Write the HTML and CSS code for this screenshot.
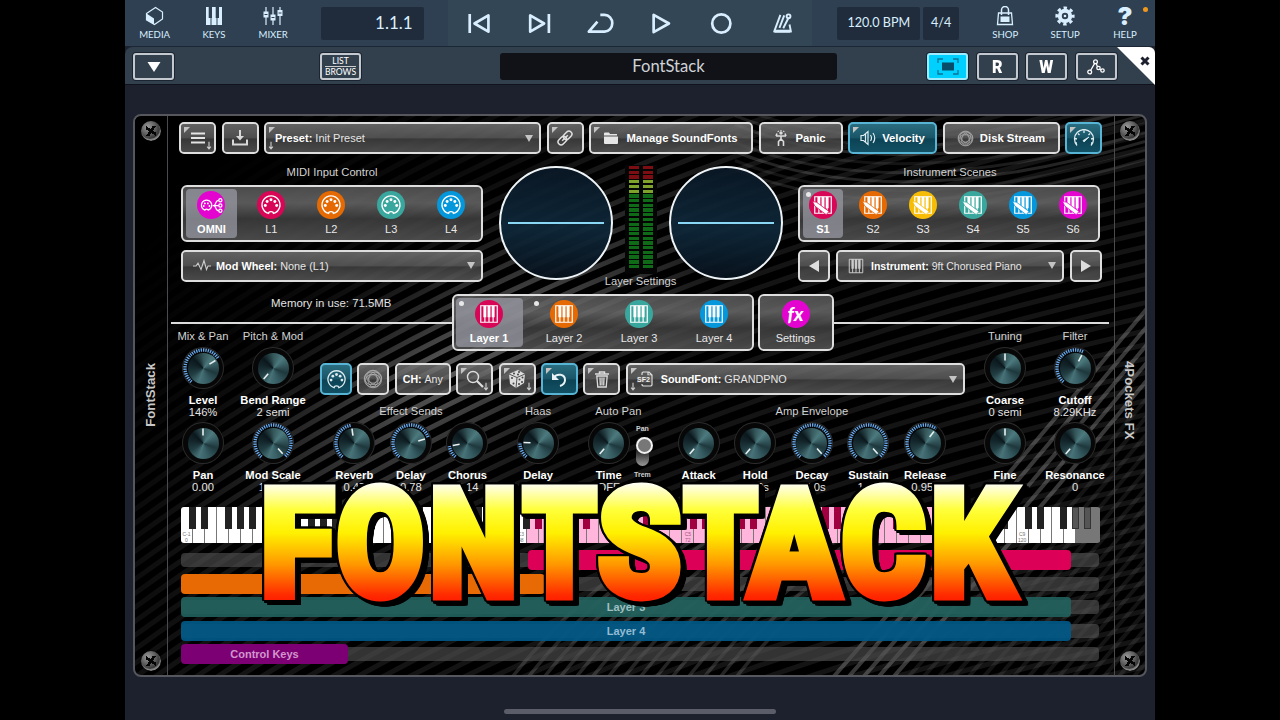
FILE: index.html
```html
<!DOCTYPE html>
<html lang="en">
<head>
  <meta charset="UTF-8" />
  <meta name="viewport" content="width=device-width, initial-scale=1.0"/>
  <title>FontStack</title>
  <link rel="stylesheet" href="styles.css">
</head>
<body>
  <!-- shared icons -->
  <svg class="defs" width="0" height="0">
    <symbol id="i-midi" viewBox="0 0 24 24">
      <path d="M9.3 21.2A9.8 9.8 0 1 1 14.7 21.2C14.4 18.6 9.6 18.6 9.3 21.2Z" fill="none" stroke="currentColor" stroke-width="1.5"/>
      <g fill="currentColor"><circle cx="5.8" cy="12.6" r="1.6"/><circle cx="7.8" cy="8.2" r="1.6"/><circle cx="12" cy="6.3" r="1.6"/><circle cx="16.2" cy="8.2" r="1.6"/><circle cx="18.2" cy="12.6" r="1.6"/></g>
    </symbol>
    <symbol id="i-omni" viewBox="0 0 24 24">
      <g fill="none" stroke="currentColor" stroke-width="1.2"><path d="M5.5 16.500A5 5 0 1 1 9 16.500C8.500 15 6 15 5.500 16.500Z"/><path d="M13 12h6M14 12c3 0 1-5 5-5M14 12c3 0 1 5 5 5"/><circle cx="20.500" cy="7" r="1.500"/><circle cx="20.500" cy="12" r="1.500"/><circle cx="20.500" cy="17" r="1.500"/></g>
      <g fill="currentColor"><circle cx="4.500" cy="12.500" r=".9"/><circle cx="5.600" cy="10" r=".9"/><circle cx="8.500" cy="10" r=".9"/><circle cx="10" cy="12.500" r=".9"/></g>
    </symbol>
    <symbol id="i-keys" viewBox="0 0 24 24">
      <path d="M3 3h18v18H3zM7.500 14v7M12 14v7M16.500 14v7" fill="none" stroke="currentColor" stroke-width="1.300"/>
      <path d="M5.900 3h3.200v12.500H5.900zM10.400 3h3.200v12.500h-3.200zM14.900 3h3.200v12.500h-3.200z" fill="currentColor"/>
    </symbol>
    <symbol id="i-scene" viewBox="0 0 24 24">
      <use href="#i-keys" width="24" height="24"/>
      <path d="M.5 8l4.500 1L18.500 19l-3 3.500L3 13z" fill="currentColor" stroke="var(--c)" stroke-width=".8"/>
    </symbol>
    <symbol id="i-swirl" viewBox="0 0 24 24">
      <g fill="none" stroke="currentColor" stroke-width=".8">
        <circle cx="12" cy="9.500" r="7.500"/><circle cx="14.400" cy="11.200" r="7.500"/><circle cx="13.500" cy="14" r="7.500"/><circle cx="10.500" cy="14" r="7.500"/><circle cx="9.600" cy="11.200" r="7.500"/><circle cx="12" cy="12" r="10.500"/>
      </g>
    </symbol>
    <symbol id="i-arrow" viewBox="0 0 8 12">
      <path d="M4 1v9M1.500 7.500L4 10.500 6.500 7.500" fill="none" stroke="currentColor" stroke-width="1.5"/>
    </symbol>
  </svg>

  <div class="app">
    <header class="topbar">
      <nav class="menu">
        <div class="menu-item">
          <svg width="20" height="20" viewBox="0 0 20 20"><path d="M1.500 7.500L10.500 1.500 17.500 6v7L9.500 18.500 1.500 14z" fill="none" stroke="currentColor" stroke-width="1.200"/><path d="M1.500 7.500L9 12.500v6L1.500 14z" fill="currentColor"/></svg>
          MEDIA
        </div>
        <div class="menu-item">
          <svg width="20" height="20" viewBox="0 0 20 20"><path d="M2 1h2.700v11h1.800v7H2zM8 1h3.700v11h.8v7H7.500v-7H8zM15 1h3v18h-4.500v-7H15z" fill="currentColor"/></svg>
          KEYS
        </div>
        <div class="menu-item">
          <svg width="22" height="20" viewBox="0 0 22 20"><path d="M4 1v18M11 1v18M18 1v18" stroke="currentColor" stroke-width="1.200"/><path d="M1.500 5.500h5v6h-5zM8.500 8.500h5v6h-5zM15.500 4h5v6h-5z" fill="currentColor"/><path d="M2.500 8.500h3M9.500 11.500h3M16.500 7h3" stroke="#2e4051"/></svg>
          MIXER
        </div>
      </nav>
      <div class="counter">1.1.1</div>
      <div class="transport">
        <svg viewBox="0 0 24 24"><path d="M2 2v20M21.500 3.500v17L7 12z"/></svg>
        <svg viewBox="0 0 24 24"><path d="M22 2v20M2.500 3.500v17L17 12z"/></svg>
        <svg viewBox="0 0 30 24"><path d="M12 10L3 20.500h16.500c4.500 0 8-4 8-8.800S24 3 19.500 3H15"/></svg>
        <svg viewBox="0 0 24 24"><path d="M4 3v18L20 12z"/></svg>
        <svg viewBox="0 0 24 24"><circle cx="12" cy="12" r="9.500"/></svg>
        <svg class="metro" viewBox="0 0 24 24"><path d="M10 3L3.500 20.500h17.500L19.500 13M14 3.500L9 16.500M13 17l5.500-11"/><circle cx="18.500" cy="4.500" r="2"/><path d="M4 20h16" stroke-width="3"/></svg>
      </div>
      <div class="tempo">120.0 BPM</div>
      <div class="signature">4/4</div>
      <nav class="menu menu-right">
        <div class="menu-item">
          <svg width="20" height="20" viewBox="0 0 20 20"><path d="M3.500 7h13l1 11.500h-15z" fill="none" stroke="currentColor" stroke-width="1.300"/><path d="M5.500 10.500h9V16h-9z" fill="currentColor"/><path d="M6.500 9V4a3.500 3.500 0 0 1 7 0v5" fill="none" stroke="currentColor" stroke-width="1.500"/></svg>
          SHOP
        </div>
        <div class="menu-item">
          <svg width="20" height="20" viewBox="0 0 20 20"><circle cx="10" cy="10" r="5.200" fill="none" stroke="currentColor" stroke-width="4"/><circle cx="10" cy="10" r="8.200" fill="none" stroke="currentColor" stroke-width="2.800" stroke-dasharray="3.440 3" stroke-dashoffset="1.700"/><circle cx="10" cy="10" r="1.300" fill="currentColor"/></svg>
          SETUP
        </div>
        <div class="menu-item">
          <span class="question">?</span>
          HELP
          <i class="alert"></i>
        </div>
      </nav>
    </header>

    <div class="subbar">
      <div class="box-btn"><svg width="14" height="12" viewBox="0 0 14 12"><path d="M.5 1h13L7 11z" fill="#fff"/></svg></div>
      <div class="box-btn list-btn"><span>LIST</span><span>BROWS</span></div>
      <div class="title">FontStack</div>
      <div class="sub-actions">
        <div class="box-btn on"><svg width="22" height="17" viewBox="0 0 22 17"><path d="M1 5V1h5M16 1h5v4M21 12v4h-5M6 16H1v-4" fill="none" stroke="#067398" stroke-width="1.300"/><path d="M5 4.500h12v8H5z" fill="#074c68"/></svg></div>
        <div class="box-btn letter"><span>R</span></div>
        <div class="box-btn letter"><span>W</span></div>
        <div class="box-btn"><svg width="18" height="16" viewBox="0 0 18 16"><path d="M3 12.500l5.500-9.500 3 7 4 1.500" fill="none" stroke="#fff" stroke-width="1.300"/><g fill="#323f4d" stroke="#fff" stroke-width="1.300"><circle cx="2.700" cy="13" r="1.900"/><circle cx="8.500" cy="2.700" r="1.900"/><circle cx="11.500" cy="9" r="1.700"/><circle cx="15.500" cy="11.500" r="1.700"/></g></svg></div>
      </div>
      <div class="close"><svg width="10" height="10" viewBox="0 0 10 10"><path d="M1.500 1.500l7 7M8.500 1.500l-7 7" stroke="#1d202d" stroke-width="3"/></svg></div>
    </div>

    <main class="panel">
      <svg class="texture" id="texture" viewBox="0 0 1010 558">
        <defs>
          <radialGradient id="sheen" gradientUnits="userSpaceOnUse" cx="310" cy="250" r="380" gradientTransform="translate(310 250) rotate(-32) scale(1 .36) translate(-310 -250)">
            <stop offset="0" stop-color="#fff" stop-opacity=".38"/>
            <stop offset=".35" stop-color="#fff" stop-opacity=".24"/>
            <stop offset=".8" stop-color="#fff" stop-opacity=".11"/>
            <stop offset="1" stop-color="#fff" stop-opacity=".08"/>
          </radialGradient>
          <linearGradient id="corner-shade" x1="0" y1="0" x2=".45" y2=".2">
            <stop offset=".2" stop-color="#000"/>
            <stop offset="1" stop-color="#000" stop-opacity="0"/>
          </linearGradient>
        </defs>
      </svg>

      <aside class="rail">
        <i class="screw"></i>
        <span class="rail-text">FontStack</span>
        <i class="screw"></i>
      </aside>

      <section class="content">
        <div class="toolbar">
          <div class="btn corner w37"><svg width="14" height="12" viewBox="0 0 14 12"><path d="M0 1.500h14M0 6h14M0 10.500h14" stroke="#e4e4e4" stroke-width="1.800"/></svg><svg class="drop-arrow"><use href="#i-arrow"/></svg></div>
          <div class="btn w37"><svg width="16" height="16" viewBox="0 0 16 16"><path d="M1 9.500v5h14v-5" fill="none" stroke="#d8d8d8" stroke-width="2"/><path d="M8 0v8" stroke="#d8d8d8" stroke-width="2"/><path d="M4 6h8l-4 4.500z" fill="#d8d8d8"/></svg></div>
          <div class="btn corner select preset"><svg class="drop-arrow left"><use href="#i-arrow"/></svg><b>Preset:</b>&nbsp;Init Preset<i class="caret"></i></div>
          <div class="btn corner w37"><svg width="16" height="16" viewBox="0 0 16 16"><g fill="none" stroke="#e0e0e0" stroke-width="1.500" transform="rotate(-45 8 8)"><rect x="-.5" y="5" width="9.500" height="6" rx="3"/><rect x="7" y="5" width="9.500" height="6" rx="3"/><path d="M4 8h8"/></g></svg></div>
          <div class="btn corner manage"><svg width="14" height="12" viewBox="0 0 14 12"><path d="M0 1.500Q0 .5 1 .5h4l1 1.500h7V3.500H0zM0 4.500h14V11q0 1-1 1H1q-1 0-1-1z" fill="#e6e6e6"/></svg><b>Manage SoundFonts</b></div>
          <div class="btn panic"><svg width="12" height="17" viewBox="0 0 12 17"><circle cx="6" cy="3" r="1.700" fill="#ddd"/><path d="M1 6h10M6 5.500V10M6 9l-2.500 2.500V16M6 9l2.500 2.500V16M1 6l1-2.500M11 6l-1-2.500M3 1l.5.8M9 1l-.5.8M6 0v.7" fill="none" stroke="#ddd" stroke-width="1.600"/></svg><b>Panic</b></div>
          <div class="btn corner on velocity"><svg width="17" height="16" viewBox="0 0 17 16"><path d="M1 5.500h2.500L8 1.500v13L3.500 10.500H1zM5.500 4v8M10.500 5q2 3 0 6M13 3q3.500 5 0 10" fill="none" stroke="#dcecf0" stroke-width="1.200"/></svg><b>Velocity</b></div>
          <div class="btn disk"><svg width="17" height="17" class="soft"><use href="#i-swirl"/></svg><b>Disk Stream</b></div>
          <div class="btn corner on w37"><svg width="22" height="18" viewBox="0 0 22 18"><path d="M4 16.500A9.500 9.500 0 1 1 18 16.500M2 9.500l2 .5M5 4.500l1.500 1.500M11 1.500V4M17 4.500L15.500 6M20 9.500l-2 .5M2 14h2M20 14h-2" fill="none" stroke="#dcecf0" stroke-width="1.300"/><path d="M10 11.500l6-3.500-5 5z" fill="#dcecf0" stroke="#dcecf0" stroke-width=".8"/></svg></div>
        </div>

        <div class="upper">
          <div class="col">
            <h3>MIDI Input Control</h3>
            <div class="tabs midi-tabs">
              <div class="tab active"><span class="dot magenta"><svg><use href="#i-omni"/></svg></span>OMNI</div>
              <div class="tab"><span class="dot red"><svg><use href="#i-midi"/></svg></span>L1</div>
              <div class="tab"><span class="dot orange"><svg><use href="#i-midi"/></svg></span>L2</div>
              <div class="tab"><span class="dot teal"><svg><use href="#i-midi"/></svg></span>L3</div>
              <div class="tab"><span class="dot blue"><svg><use href="#i-midi"/></svg></span>L4</div>
            </div>
            <div class="btn select modwheel"><svg width="18" height="14" viewBox="0 0 18 14"><path d="M0 7h3l2-3 3 6.500L11 1.500l2.500 9L15 7h3" fill="none" stroke="#ccc" stroke-width="1.100"/></svg><b>Mod Wheel:</b>&nbsp;None (L1)<i class="caret"></i></div>
          </div>
          <div class="scopes">
            <div class="scope"></div>
            <div class="meter-col">
              <div class="meters"><div class="meter"></div><div class="meter"></div></div>
              <h3>Layer Settings</h3>
            </div>
            <div class="scope"></div>
          </div>
          <div class="col">
            <h3>Instrument Scenes</h3>
            <div class="tabs scene-tabs">
              <div class="tab active marked"><span class="dot red"><svg><use href="#i-scene"/></svg></span>S1</div>
              <div class="tab"><span class="dot orange"><svg><use href="#i-scene"/></svg></span>S2</div>
              <div class="tab"><span class="dot yellow"><svg><use href="#i-scene"/></svg></span>S3</div>
              <div class="tab"><span class="dot teal"><svg><use href="#i-scene"/></svg></span>S4</div>
              <div class="tab"><span class="dot blue"><svg><use href="#i-scene"/></svg></span>S5</div>
              <div class="tab"><span class="dot magenta"><svg><use href="#i-scene"/></svg></span>S6</div>
            </div>
            <div class="instrument-row">
              <div class="btn step"><svg width="12" height="12" viewBox="0 0 12 12"><path d="M11 0v12L1 6z" fill="#ddd"/></svg></div>
              <div class="btn select instrument"><svg width="18" height="18"><use href="#i-keys"/></svg><b>Instrument:</b>&nbsp;9ft Chorused Piano<i class="caret"></i></div>
              <div class="btn step"><svg width="12" height="12" viewBox="0 0 12 12"><path d="M1 0v12l10-6z" fill="#ddd"/></svg></div>
            </div>
          </div>
        </div>

        <div class="layers-row">
          <div class="memory">Memory in use: 71.5MB</div>
          <div class="tabs layer-tabs">
            <div class="tab active marked"><span class="dot red"><svg><use href="#i-keys"/></svg></span>Layer 1</div>
            <div class="tab marked"><span class="dot orange"><svg><use href="#i-keys"/></svg></span>Layer 2</div>
            <div class="tab"><span class="dot teal"><svg><use href="#i-keys"/></svg></span>Layer 3</div>
            <div class="tab"><span class="dot blue"><svg><use href="#i-keys"/></svg></span>Layer 4</div>
          </div>
          <div class="tabs settings">
            <div class="tab"><span class="dot magenta fx">fx</span>Settings</div>
          </div>
          <div class="rule"></div>
        </div>

        <div class="controls">
          <div class="side-knobs">
            <h3>Mix &amp; Pan</h3><h3>Pitch &amp; Mod</h3>
            <div class="ctl"><div class="knob" data-angle="59" data-arc></div><b>Level</b><span>146%</span></div>
            <div class="ctl"><div class="knob" data-angle="-140"></div><b>Bend Range</b><span>2 semi</span></div>
            <div class="ctl"><div class="knob" data-angle="0"></div><b>Pan</b><span>0.00</span></div>
            <div class="ctl"><div class="knob" data-angle="138" data-arc></div><b>Mod Scale</b><span>100%</span></div>
          </div>

          <div class="layer-controls">
            <div class="layer-tools">
              <div class="btn on w32"><svg width="21" height="21" class="light"><use href="#i-midi"/></svg></div>
              <div class="btn w32"><svg width="20" height="20" class="soft"><use href="#i-swirl"/></svg></div>
              <div class="btn channel"><b>CH:</b>&nbsp;Any</div>
              <div class="btn corner w37"><svg width="18" height="18" viewBox="0 0 18 18"><circle cx="7" cy="7" r="5.500" fill="none" stroke="#ddd" stroke-width="1.400"/><path d="M11 11l6 6" stroke="#ddd" stroke-width="2.200"/></svg><svg class="drop-arrow"><use href="#i-arrow"/></svg></div>
              <div class="btn corner w37"><svg width="20" height="20" viewBox="0 0 20 20"><path d="M2 5l9-4 7 4-1 9-8 5-6-4z" fill="#ddd"/><path d="M2 5l8 3.500L18 5M10 8.500L9 19" fill="none" stroke="#555" stroke-width="1"/><g fill="#444"><circle cx="7" cy="4.500" r="1"/><circle cx="11" cy="5.500" r="1"/><circle cx="12" cy="3" r="1"/><circle cx="5" cy="9" r="1"/><circle cx="6.500" cy="14.500" r="1"/><circle cx="12.500" cy="10.500" r="1"/><circle cx="15.500" cy="8.500" r="1"/><circle cx="12" cy="15" r="1"/><circle cx="15" cy="13" r="1"/></g></svg><svg class="drop-arrow"><use href="#i-arrow"/></svg></div>
              <div class="btn corner on w37"><svg width="16" height="15" viewBox="0 0 16 15"><path d="M3 5.500C6 1 14 2 14 8c0 3-2 5-5 6" fill="none" stroke="#e6f2f5" stroke-width="2"/><path d="M1 1v7h7z" fill="#e6f2f5"/></svg></div>
              <div class="btn corner w37"><svg width="14" height="17" viewBox="0 0 14 17"><path d="M0 3h14M4.500 3V1h5v2" fill="none" stroke="#ddd" stroke-width="1.500"/><path d="M1.800 5l1 11h8.400l1-11zM5 6.500l.3 8M7 6.500v8M9 6.500l-.3 8" fill="none" stroke="#ddd" stroke-width="1.300"/></svg></div>
              <div class="btn corner select soundfont"><svg class="drop-arrow left"><use href="#i-arrow"/></svg><svg width="17" height="16" viewBox="0 0 17 16"><path d="M5 4V2l1-1h6l3 3v10l-1 1H6l-1-1v-1M11 1v3h4" fill="none" stroke="#ddd" stroke-width="1.200"/><path d="M0 4.500h14v7H0z" fill="#5c5c5c"/><text x="0" y="10.700" font-size="7" font-weight="bold" fill="#eee">SF2</text></svg><b>SoundFont:</b>&nbsp;GRANDPNO<i class="caret"></i></div>
            </div>
            <div class="groups">
              <div class="group">
                <h3>Effect Sends</h3>
                <div class="group-knobs">
                  <div class="ctl"><div class="knob" data-angle="-8" data-arc></div><b>Reverb</b><span>0.47</span></div>
                  <div class="ctl"><div class="knob" data-angle="74" data-arc></div><b>Delay</b><span>0.78</span></div>
                  <div class="ctl"><div class="knob" data-angle="-100" data-arc></div><b>Chorus</b><span>0.14</span></div>
                </div>
              </div>
              <div class="group haas">
                <h3>Haas</h3>
                <div class="group-knobs">
                  <div class="ctl"><div class="knob" data-angle="-88" data-arc></div><b>Delay</b><span>8ms</span></div>
                </div>
              </div>
              <div class="group autopan">
                <h3>Auto Pan</h3>
                <div class="group-knobs">
                  <div class="ctl"><div class="knob" data-angle="-140"></div><b>Time</b><span>OFF</span></div>
                  <div class="switch"><small>Pan</small><i></i><small>Trem</small></div>
                </div>
              </div>
              <div class="group">
                <h3>Amp Envelope</h3>
                <div class="group-knobs">
                  <div class="ctl"><div class="knob" data-angle="-140"></div><b>Attack</b><span>0.00s</span></div>
                  <div class="ctl"><div class="knob" data-angle="-140"></div><b>Hold</b><span>0.00s</span></div>
                  <div class="ctl"><div class="knob" data-angle="138" data-arc></div><b>Decay</b><span>10.0s</span></div>
                  <div class="ctl"><div class="knob" data-angle="138" data-arc></div><b>Sustain</b><span>1.00</span></div>
                  <div class="ctl"><div class="knob" data-angle="38" data-arc></div><b>Release</b><span>0.95s</span></div>
                </div>
              </div>
            </div>
          </div>

          <div class="side-knobs">
            <h3>Tuning</h3><h3>Filter</h3>
            <div class="ctl"><div class="knob" data-angle="0"></div><b>Coarse</b><span>0 semi</span></div>
            <div class="ctl"><div class="knob" data-angle="28" data-arc></div><b>Cutoff</b><span>8.29KHz</span></div>
            <div class="ctl"><div class="knob" data-angle="0"></div><b>Fine</b><span>0</span></div>
            <div class="ctl"><div class="knob" data-angle="-140"></div><b>Resonance</b><span>0</span></div>
          </div>
        </div>

        <div class="keyboard" id="keyboard"></div>

        <div class="lanes">
          <div class="lane"><div class="range lane-1"></div></div>
          <div class="lane"><div class="range lane-2"></div></div>
          <div class="lane"><div class="range lane-3">Layer 3</div></div>
          <div class="lane"><div class="range lane-4">Layer 4</div></div>
          <div class="lane"><div class="range lane-5">Control Keys</div></div>
        </div>
      </section>

      <aside class="rail rail-right">
        <i class="screw"></i>
        <span class="rail-text">4Pockets FX</span>
        <i class="screw"></i>
      </aside>
    </main>

    <div class="home-bar"></div>
  </div>

  <!-- big headline over the panel -->
  <svg class="headline" width="1280" height="720" viewBox="0 0 1280 720">
    <defs>
      <linearGradient id="fire" gradientUnits="userSpaceOnUse" x1="0" y1="484" x2="0" y2="601">
        <stop offset="0" stop-color="#fffff0"/>
        <stop offset=".22" stop-color="#ffff3a"/>
        <stop offset=".42" stop-color="#fff000"/>
        <stop offset=".68" stop-color="#ff9a00"/>
        <stop offset=".95" stop-color="#ff2a00"/>
        <stop offset="1" stop-color="#ff1e00"/>
      </linearGradient>
    </defs>
    <text id="headline" y="596"></text>
  </svg>

  <script src="script.js"></script>
</body>
</html>
```
FILE: styles.css
```css
html, body {
  margin: 0;
  padding: 0;
  height: 100%;
  overflow: hidden;
  background: #000;
  font-family: "Liberation Sans", Arial, sans-serif;
}

* {
  box-sizing: border-box;
}

.defs {
  position: absolute;
}

h3 {
  margin: 0;
  font-size: 11.2px;
  line-height: 14px;
  font-weight: normal;
  text-align: center;
  white-space: nowrap;
  color: #d2d2d2;
}

.app {
  width: 1030px;
  height: 720px;
  margin: 0 auto;
  background: #1d202d;
  display: flex;
  flex-direction: column;
}

/* top bar */
.topbar {
  height: 46px;
  flex: none;
  display: flex;
  background: #2e4051;
  color: #d9efff;
  font-family: Lato, sans-serif;
}

.menu {
  display: flex;
  width: 178px;
}

.menu-right {
  width: 180px;
  margin-left: 16px;
}

.menu-item {
  flex: 1;
  display: flex;
  flex-direction: column;
  align-items: center;
  padding-top: 6px;
  font-size: 9.6px;
  line-height: 12px;
  position: relative;
}

.menu-item svg {
  margin-bottom: 3px;
}

.question {
  height: 23px;
  font: 900 25px/21px Inter, sans-serif;
}

.alert {
  position: absolute;
  top: 7px;
  right: 7px;
  width: 5px;
  height: 5px;
  border-radius: 50%;
  background: #f0981e;
}

.counter, .tempo, .signature {
  height: 33px;
  margin-top: 7px;
  line-height: 32px;
  background: #202c3b;
  border-radius: 2px;
}

.counter {
  width: 103px;
  margin-left: 18px;
  padding-right: 11px;
  text-align: right;
  font-size: 17px;
}

.transport {
  width: 365px;
  margin-left: 24px;
  padding-left: 1px;
  display: flex;
  align-items: center;
  background: #334656;
}

.transport svg {
  flex: 1;
  min-width: 0;
  height: 23px;
  fill: none;
  stroke: #d9efff;
  stroke-width: 2.8;
  stroke-linejoin: round;
}

.transport .metro {
  stroke-width: 2;
}

.tempo {
  width: 83px;
  margin-left: 25px;
  text-align: center;
  font-size: 12.6px;
}

.signature {
  width: 36px;
  margin-left: 3px;
  text-align: center;
  font-size: 12.6px;
}

/* second bar */
.subbar {
  height: 39px;
  flex: none;
  display: flex;
  align-items: flex-start;
  padding: 6px 0 0 8px;
  border-top: 1px solid #1b2735;
  border-bottom: 1px solid #10131b;
  border-radius: 8px 8px 0 0;
  background: #323f4d;
  font-family: Lato, sans-serif;
}

.box-btn {
  width: 41px;
  height: 27px;
  display: flex;
  justify-content: center;
  align-items: center;
  border: 2px solid #c3c9cf;
  border-radius: 3px;
  background: #323f4d;
  box-shadow: 0 0 0 1px #1b2431;
}

.box-btn.on {
  background: #00d0fd;
  border-color: #9eecff;
}

.list-btn {
  margin-left: 146px;
  flex-direction: column;
  color: #fff;
  font-size: 8.6px;
  line-height: 10.5px;
}

.list-btn span:last-child {
  border-top: 1px solid #ccc;
}

.title {
  width: 337px;
  height: 27px;
  margin-left: 139px;
  border-radius: 3px;
  background: #111218;
  color: #cfd2d6;
  font-size: 16.6px;
  line-height: 26px;
  text-align: center;
}

.sub-actions {
  display: flex;
  gap: 8.6px;
  margin-left: 90px;
}

.letter {
  color: #fff;
  font: 900 19px/22px Roboto, sans-serif;
}

.letter span {
  transform: scaleX(.85);
}

.close {
  width: 38px;
  height: 38px;
  margin: -6px 0 0 auto;
  display: flex;
  justify-content: flex-end;
  padding: 9px 5px 0 0;
  clip-path: polygon(0 0, 100% 0, 100% 100%);
  background: #fff;
  border-radius: 0 6px 0 0;
}

/* plugin panel */
.panel {
  position: relative;
  width: 1014px;
  height: 563px;
  margin: 29px 0 0 8px;
  display: flex;
  border: 2px solid #56575c;
  border-radius: 8px;
  background: #000;
  overflow: hidden;
  color: #fff;
}

.texture {
  position: absolute;
  width: 1010px;
  height: 559px;
}

.rail {
  position: relative;
  width: 33px;
  flex: none;
  display: flex;
  flex-direction: column;
  justify-content: space-between;
  align-items: center;
  padding: 5px 1px 4px 0;
  border-right: 1px solid #4b4b4d;
}

.rail-right {
  width: 31px;
  padding-left: 0;
  border-right: 0;
  border-left: 1px solid #4b4b4d;
}

.rail-text {
  writing-mode: vertical-rl;
  transform: rotate(180deg) translateY(1px);
  font-size: 13.2px;
  font-weight: bold;
  color: #c8c8c8;
}

.rail-right .rail-text {
  transform: translateY(4px);
}

.screw {
  width: 20px;
  height: 20px;
  border-radius: 50%;
  background:
    linear-gradient(35deg, transparent 40%, #050505 40% 60%, transparent 60%) center / 10px 10px no-repeat,
    linear-gradient(-55deg, transparent 40%, #050505 40% 60%, transparent 60%) center / 10px 10px no-repeat,
    radial-gradient(circle at 35% 30%, #9a9a9a, #555 45%, #1a1a1a 75%);
  box-shadow: inset -1px -2px 1px #888, 0 0 2px #000;
}

.content {
  position: relative;
  width: 946px;
  display: flex;
  flex-direction: column;
}

.btn {
  position: relative;
  height: 32px;
  display: flex;
  align-items: center;
  justify-content: center;
  border: 2px solid #dedede;
  border-radius: 5px;
  background: linear-gradient(rgba(118, 118, 118, .82), rgba(96, 96, 96, .82) 48%, rgba(68, 68, 68, .82) 54%, rgba(90, 90, 90, .82));
  background-clip: padding-box;
  color: #e6e6e6;
  font-size: 11.2px;
  white-space: nowrap;
}

.btn b {
  color: #fff;
}

.btn.on {
  border-color: #58b4d4;
  background: linear-gradient(#2a6d80, #1a5568 48%, #0c4355 54%, #125064);
}

.corner::before {
  content: "";
  position: absolute;
  top: 3px;
  left: 3px;
  border: 3.500px solid transparent;
  border-top-color: #c2c2c2;
  border-left-color: #c2c2c2;
}

.drop-arrow {
  position: absolute;
  right: 2px;
  bottom: 2px;
  width: 6px;
  height: 9px;
  color: #ccc;
}

.drop-arrow.left {
  right: auto;
  left: 2px;
}

.caret {
  margin-left: auto;
  border: 4px solid transparent;
  border-top: 7px solid #c4c4c4;
  border-bottom: 0;
}

.select {
  justify-content: flex-start;
  padding: 0 6px 0 9px;
}

.soft {
  color: #bdbdbd;
}

.light {
  color: #dcecf0;
}

.w37 {
  width: 37px;
}

.w32 {
  width: 32px;
}

.toolbar {
  display: flex;
  gap: 5.500px;
  padding: 6px 0 0 11px;
}

.preset {
  width: 277px;
  font-size: 11px;
}

.manage {
  width: 164px;
  gap: 8px;
  font-size: 11.300px;
}

.panic {
  width: 84px;
  gap: 8px;
  font-size: 11.300px;
}

.velocity {
  width: 89px;
  gap: 5px;
  font-size: 11.300px;
}

.disk {
  width: 117px;
  gap: 6px;
  font-size: 11.300px;
}

/* upper half */
.upper {
  height: 128px;
  padding: 11px 12px 0 13px;
  display: flex;
  justify-content: space-between;
}

.col {
  width: 302px;
}

.col:last-child {
  width: 304px;
}

.tabs {
  display: flex;
  border: 2px solid #dedede;
  border-radius: 6px;
  background: linear-gradient(rgba(92, 92, 92, .82), rgba(108, 108, 108, .82) 30%, rgba(66, 66, 66, .82) 60%, rgba(88, 88, 88, .82));
  background-clip: padding-box;
}

.col .tabs {
  width: 302px;
  height: 57px;
  margin: 6px 0 7.500px;
}

.tab {
  position: relative;
  flex: 1;
  margin: 2px;
  padding-top: 2px;
  display: flex;
  flex-direction: column;
  align-items: center;
  gap: 4px;
  border-radius: 4px;
  font-size: 11px;
  line-height: 13px;
  color: #e8e8e8;
}

.midi-tabs .tab {
  margin: 2px 4.500px;
}

.midi-tabs .tab:first-child {
  margin-left: 3px;
}

.scene-tabs .tab {
  margin: 2px 5px;
}

.scene-tabs .tab:first-child {
  margin-left: 3px;
}

.tab.active {
  background: rgba(152, 154, 163, .75);
  color: #fff;
  font-weight: bold;
}

.marked::before {
  content: "";
  position: absolute;
  top: 3px;
  left: 3px;
  width: 5px;
  height: 5px;
  border-radius: 50%;
  background: #e8e8e8;
}

.dot {
  width: 28px;
  height: 28px;
  display: flex;
  align-items: center;
  justify-content: center;
  border-radius: 50%;
  background: var(--c);
  color: #fff;
}

.dot svg {
  width: 22px;
  height: 22px;
}

.midi-tabs .tab:first-child svg {
  width: 25px;
  height: 25px;
}

.magenta { --c: #e404cf; }
.red { --c: #d80656; }
.orange { --c: #e56a04; }
.yellow { --c: #f7bd06; }
.teal { --c: #3aa79e; }
.blue { --c: #0497dc; }

.fx {
  font: italic 900 19px/24px Lato, sans-serif;
}

.modwheel {
  padding-left: 10px;
  font-size: 10.900px;
}

.modwheel svg {
  margin-right: 5px;
}

.instrument-row {
  display: flex;
  justify-content: space-between;
}

.step {
  width: 32px;
}

.instrument {
  width: 228px;
  padding-left: 9px;
  font-size: 10.500px;
}

.instrument svg {
  margin-right: 6px;
  color: #ccc;
}

.scopes {
  width: 284px;
  display: flex;
}

.scope {
  width: 114px;
  height: 114px;
  flex: none;
  margin-top: 1px;
  display: flex;
  align-items: center;
  padding: 0 7px;
  border: 2px solid #eef3f6;
  border-radius: 50%;
  background: linear-gradient(rgba(10, 24, 38, .92), rgba(14, 40, 58, .92) 55%, rgba(8, 18, 30, .92));
}

.scope::before {
  content: "";
  width: 100%;
  height: 2px;
  background: #8ad6f5;
}

.meter-col {
  width: 56px;
  display: flex;
  flex-direction: column;
  align-items: center;
}

.meters {
  width: 32px;
  display: flex;
  justify-content: center;
  gap: 4px;
  padding: 1px 0 5px;
  background: #050505;
}

.meter {
  width: 10px;
  height: 103px;
  background:
    repeating-linear-gradient(transparent 0 3.300px, #050505 3.300px 4.710px),
    linear-gradient(#7c0d12 0 14px, #7fa32a 14px 28px, #0f6a18 28px);
}

/* layer tabs */
.layers-row {
  height: 42px;
  padding: 12px 5px 0 3px;
  display: flex;
  align-items: flex-start;
}

.memory {
  width: 280.500px;
  height: 30px;
  padding: 3px 0 0 40px;
  border-bottom: 2px solid #dcdcdc;
  font-size: 11.400px;
  text-align: center;
  color: #e2e2e2;
}

.rule {
  flex: 1;
  height: 30px;
  border-bottom: 2px solid #dcdcdc;
}

.layer-tabs, .settings {
  height: 57px;
}

.layer-tabs {
  width: 302px;
}

.layer-tabs .tab {
  margin: 2px 4px;
}

.layer-tabs .tab:first-child {
  margin-left: 2px;
}

.settings {
  width: 76px;
  margin-left: 4px;
}

/* knobs */
.controls {
  height: 183px;
  display: flex;
  padding-top: 5px;
}

.side-knobs {
  width: 140px;
  display: grid;
  grid-template-columns: 70px 70px;
  grid-template-rows: 18px 75px 75px;
}

.ctl {
  display: flex;
  flex-direction: column;
  align-items: center;
  font-size: 11.200px;
  line-height: 12px;
  white-space: nowrap;
}

.ctl span {
  color: #e4e4e4;
}

.knob {
  width: 42px;
  height: 42px;
  margin-bottom: 5px;
  display: grid;
  place-items: center;
  border-radius: 50%;
  box-shadow: inset 0 0 0 1px #2c2c2c;
  background: #070707;
}

.knob::before {
  content: "";
  grid-area: 1 / 1;
  width: 31px;
  height: 31px;
  border-radius: 50%;
  background: conic-gradient(from 0deg, #35575b, #4c7a7e 40deg, #35595e 75deg, #1e383d 110deg, #355c62 160deg, #487378 200deg, #223f44 240deg, #14272c 280deg, #0b181d 315deg, #35575b 360deg);
}

.knob svg {
  grid-area: 1 / 1;
  width: 42px;
  height: 42px;
  z-index: 1;
}

.layer-controls {
  width: 662px;
  padding: 34px 0 0 12px;
}

.layer-tools {
  display: flex;
  gap: 5.400px;
}

.channel {
  width: 56px;
  font-size: 10.600px;
}

.soundfont {
  width: 339px;
  font-size: 10.800px;
}

.soundfont svg:nth-of-type(2) {
  margin-right: 7px;
}

.groups {
  display: flex;
  margin: 9px 0 0 6px;
}

.group h3 {
  margin-bottom: 4px;
}

.group-knobs {
  display: flex;
}

.group .ctl {
  width: 56.600px;
}

.haas {
  margin-left: 14px;
}

.autopan {
  width: 76px;
  margin: 0 14px;
}

.switch {
  width: 14px;
  flex: none;
  margin-left: -1.500px;
  display: flex;
  flex-direction: column;
  align-items: center;
  gap: 4px;
}

.switch small {
  font-size: 7px;
  line-height: 9px;
  font-weight: bold;
  color: #d0d0d0;
}

.switch small:first-child {
  margin-top: 2px;
}

.switch i {
  width: 13px;
  height: 29px;
  border-radius: 7px;
  background: linear-gradient(#222 45%, #999);
}

.switch i::before {
  content: "";
  display: block;
  width: 13px;
  height: 13px;
  border: 2px solid #f2f2f2;
  border-radius: 50%;
  background: #777;
}

/* keyboard and ranges */
.keyboard {
  width: 918.600px;
  height: 36px;
  flex: none;
  margin-left: 13px;
  display: flex;
  border-radius: 3px;
  overflow: hidden;
}

.key {
  position: relative;
  flex: 1;
  display: flex;
  flex-direction: column;
  justify-content: flex-end;
  border-right: 1px solid #777;
  background: #fff;
  color: #777;
  font-size: 5px;
  line-height: 6px;
  text-align: center;
}

.key.pink {
  background: #ffb5dc;
  color: #a4567f;
}

.key.off {
  background: #777;
}

.sharp {
  position: absolute;
  top: 0;
  right: -4px;
  width: 7px;
  height: 22px;
  z-index: 1;
  background: #222;
}

.pink .sharp {
  background: #a0003f;
}

.off .sharp, .sharp.dim {
  background: #555;
  border: 1px solid #333;
}

.lanes {
  width: 918px;
  margin: 7px 0 0 13px;
  display: flex;
  flex-direction: column;
  gap: 3.600px;
}

.lane {
  position: relative;
  height: 20px;
}

.lane::before {
  content: "";
  position: absolute;
  inset: 3px 0;
  border-radius: 4px;
  background: rgba(82, 82, 82, .62);
}

.range {
  position: relative;
  height: 20px;
  width: 890px;
  border-radius: 4px;
  font-size: 11px;
  line-height: 20px;
  font-weight: bold;
  text-align: center;
  color: #9fc0c0;
}

.lane-1 {
  width: 543px;
  margin-left: 347px;
  background: #dc0057;
}

.lane-2 {
  width: 364px;
  background: #e76a04;
}

.lane-3 {
  background: rgba(33, 98, 94, .9);
}

.lane-4 {
  background: rgba(0, 88, 134, .92);
  color: #93bcd4;
}

.lane-5 {
  width: 167px;
  background: #7c0074;
  color: #d296cd;
}

.home-bar {
  width: 272px;
  height: 5px;
  margin: 32px 0 0 379px;
  border-radius: 3px;
  background: #5b5d68;
}

.headline {
  position: absolute;
  top: 0;
  left: 0;
  z-index: 5;
}

.headline text {
  font-family: Roboto, sans-serif;
  font-size: 151px;
  font-weight: 900;
  fill: url(#fire);
  stroke: url(#fire);
  stroke-width: 9;
  stroke-linejoin: miter;
  filter:
    drop-shadow(1.500px 0 0 #000) drop-shadow(-2px 0 0 #000)
    drop-shadow(0 1.500px 0 #000) drop-shadow(0 -2px 0 #000)
    drop-shadow(2px 2px 0 #000) drop-shadow(3px 2px 0 #000);
}
```
FILE: script.js
```js
const NS = 'http://www.w3.org/2000/svg';

function el(name, attrs, parent) {
  const node = document.createElementNS(NS, name);
  for (const k in attrs) node.setAttribute(k, attrs[k]);
  parent.appendChild(node);
  return node;
}

function polar(angle, r) {
  const a = (angle - 90) * Math.PI / 180;
  return [21 + r * Math.cos(a), 21 + r * Math.sin(a)];
}

// knobs: blue tick ring up to the value, then the white pointer
document.querySelectorAll('.knob').forEach(knob => {
  const angle = Number(knob.dataset.angle);
  const svg = el('svg', { viewBox: '0 0 42 42' }, knob);
  if ('arc' in knob.dataset) {
    const [x1, y1] = polar(-140, 18);
    const [x2, y2] = polar(angle, 18);
    const large = angle + 140 > 180 ? 1 : 0;
    el('path', {
      d: `M${x1} ${y1}A18 18 0 ${large} 1 ${x2} ${y2}`,
      fill: 'none', stroke: '#68a9ec', 'stroke-width': 3.4, 'stroke-dasharray': '1.3 1'
    }, svg);
  }
  const [ax, ay] = polar(angle, 7.5);
  const [bx, by] = polar(angle, 14.5);
  el('path', { d: `M${ax} ${ay}L${bx} ${by}`, stroke: '#e8f0f0', 'stroke-width': 1.6 }, svg);
});

// keyboard C-1 .. G9, the last two keys are out of range
const keyboard = document.getElementById('keyboard');
const labelled = [-1, 3, 5, 9];
for (let i = 0; i < 77; i++) {
  const step = i % 7;
  const octave = Math.floor(i / 7) - 1;
  const key = document.createElement('div');
  key.className = 'key';
  if (i >= 29 && i <= 63) key.classList.add('pink');
  if (i >= 75) key.classList.add('off');
  if (step === 0 && labelled.includes(octave)) key.innerHTML = `C${octave}<br>${(octave + 1) * 12}`;
  if (step !== 2 && step !== 6 && i < 76) {
    const sharp = document.createElement('i');
    sharp.className = i === 74 ? 'sharp dim' : 'sharp';
    key.appendChild(sharp);
  }
  keyboard.appendChild(key);
}

// brushed curves behind the panel
const texture = document.getElementById('texture');
function curve(d, opacity, width, stroke = '#fff') {
  el('path', { d, fill: 'none', stroke, 'stroke-width': width, 'stroke-opacity': opacity }, texture);
}
for (let i = 0; i < 72; i++) {
  const y = 120 + i * 14;
  curve(`M-10 ${y}Q400 ${y - 300} 1020 ${y - 440}`, 1, 5, 'url(#sheen)');
}
el('rect', { width: 1010, height: 558, fill: 'url(#corner-shade)' }, texture);
for (let i = 0; i < 26; i++) {
  const x = 690 + i * 15;
  curve(`M${x} 570Q${x + 150} 400 ${x + 390} 110`, i < 5 ? 0.22 : 0.08, 4);
}
for (let i = 0; i < 15; i++) {
  const x = 370 + i * 16;
  curve(`M${x} 570Q${x + 60} 490 ${x + 160} 420`, 0.14, 3.5);
}
for (let i = 0; i < 8; i++) {
  const y = 10 + i * 9;
  curve(`M600 ${y - 20}Q760 ${y + 45} 1010 ${y - 30}`, 0.08 + (i % 3) * 0.03, 3);
}

// headline: [letter, left edge, horizontal scale]
const letters = [
  ['F', 261, 0.88], ['O', 337, 0.83], ['N', 430, 0.82],
  ['T', 523, 0.77], ['S', 598, 0.88], ['T', 684, 0.77],
  ['A', 749, 0.88], ['C', 842, 0.84], ['K', 931, 0.86]
];
const headline = document.getElementById('headline');
letters.forEach(([letter, x, scale]) => {
  const span = el('tspan', { x }, headline);
  span.textContent = letter;
  const width = span.getComputedTextLength();
  span.setAttribute('lengthAdjust', 'spacingAndGlyphs');
  span.setAttribute('textLength', (width * scale).toFixed(1));
});
```
